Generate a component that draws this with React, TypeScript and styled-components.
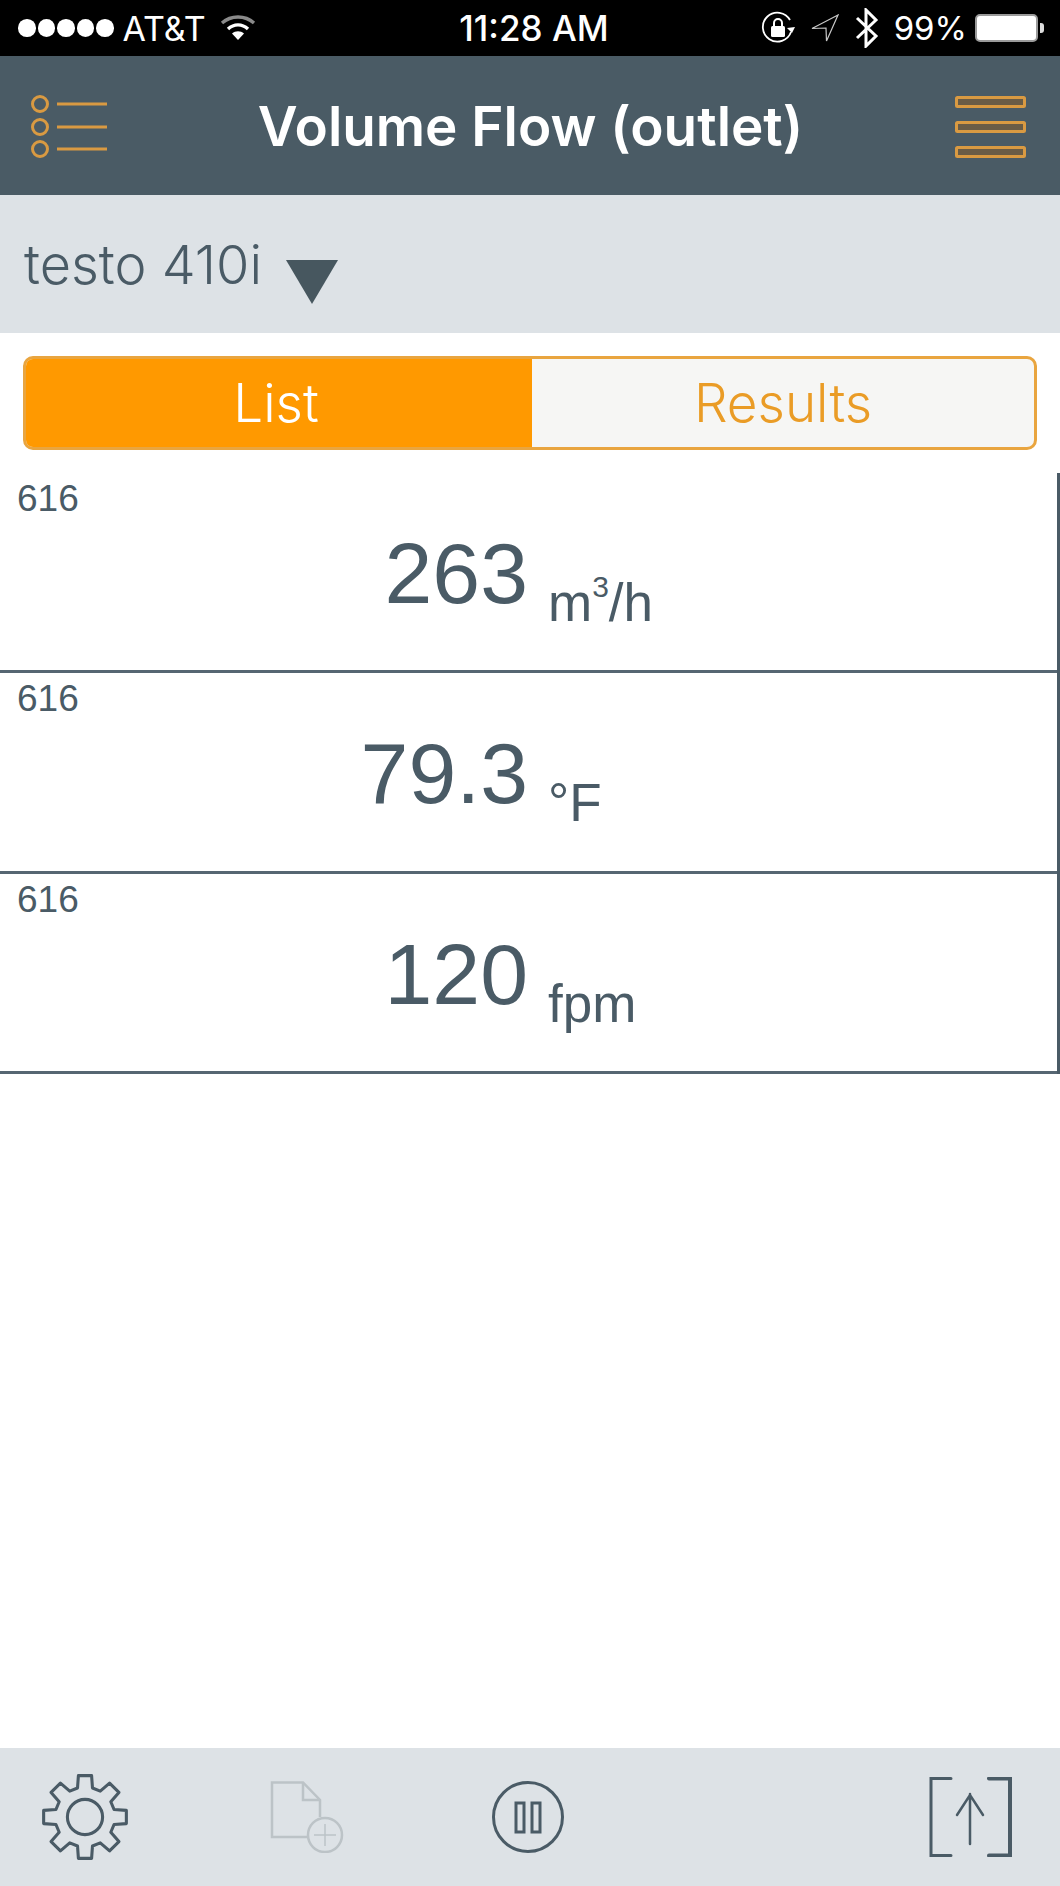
import React from 'react';
import styled, { createGlobalStyle } from 'styled-components';

const SLATE = '#4a5b66';
const ORANGE = '#ff9900';
const ICON_ORANGE = '#d99a42';

const GlobalStyle = createGlobalStyle`
  html, body {
    margin: 0;
    padding: 0;
    background: #fff;
  }
  * {
    box-sizing: border-box;
  }
`;

// 8 tooth gear outline, centred on 50,50
const gearPath = () => {
  const pts: string[] = [];
  for (let i = 0; i < 8; i++) {
    const a = (i * Math.PI) / 4 - Math.PI / 2;
    const p = (r: number, off: number) => {
      const x = 50 + r * Math.cos(a) - off * Math.sin(a);
      const y = 50 + r * Math.sin(a) + off * Math.cos(a);
      return `${x.toFixed(2)} ${y.toFixed(2)}`;
    };
    pts.push(p(33, -8.5), p(47, -7.5), p(47, 7.5), p(33, 8.5));
  }
  return `M${pts.join('L')}Z`;
};

const App = () => {
  const readings = [
    {
      id: 1,
      sensor: '616',
      value: '263',
      unit: (
        <>
          m<Sup>3</Sup>/h
        </>
      ),
    },
    { id: 2, sensor: '616', value: '79.3', unit: <>°F</> },
    { id: 3, sensor: '616', value: '120', unit: <>fpm</> },
  ];

  return (
    <Page>
      <GlobalStyle />
      <StatusBar>
        <StatusLeft>
          <Dots>
            {[0, 1, 2, 3, 4].map((i) => (
              <Dot key={i} />
            ))}
          </Dots>
          <Carrier>AT&amp;T</Carrier>
          <svg width="36" height="28" viewBox="0 0 36 28" fill="none">
            <path d="M2 9C11 1 25 1 34 9" stroke="#8a8a8a" strokeWidth="3.4" />
            <path d="M8 15C14 9.5 22 9.5 28 15" stroke="#fff" strokeWidth="3.4" />
            <path d="M12 19.5C15.5 16.5 20.5 16.5 24 19.5L18 26Z" fill="#fff" />
          </svg>
        </StatusLeft>
        <Clock>11:28 AM</Clock>
        <StatusRight>
          <svg width="34" height="34" viewBox="0 0 34 34" fill="none">
            <path d="M30 21A14.5 14.5 0 1 1 29 9" stroke="#fff" strokeWidth="1.8" />
            <path d="M26 17l5 5 3-6z" fill="#fff" />
            <rect x="10" y="15" width="14" height="11" rx="1.5" fill="#fff" />
            <path d="M13 15v-3a4 4 0 0 1 8 0v3" stroke="#fff" strokeWidth="2" />
          </svg>
          <LocationIcon width="28" height="28" viewBox="0 0 28 28" fill="none">
            <path d="M27 1L1 14.5L15 14L15.5 27Z" stroke="#c8c8c8" strokeWidth="1.2" />
          </LocationIcon>
          <BluetoothIcon width="24" height="40" viewBox="0 0 24 40" fill="none">
            <path d="M2 10L21 28L11 38V2L21 12L2 30" stroke="#fff" strokeWidth="3" />
          </BluetoothIcon>
          <Percent>99%</Percent>
          <Battery />
        </StatusRight>
      </StatusBar>

      <Header>
        <ListIcon width="80" height="64" viewBox="0 0 80 64" fill="none">
          <g stroke={ICON_ORANGE} strokeWidth="3">
            <circle cx="9" cy="9" r="7.5" />
            <circle cx="9" cy="32" r="7.5" />
            <circle cx="9" cy="54" r="7.5" />
            <path d="M26 9H76M26 32H76M26 54H76" />
          </g>
        </ListIcon>
        <Title>Volume Flow (outlet)</Title>
        <MenuIcon width="71" height="62" viewBox="0 0 71 62" fill="none">
          <g stroke={ICON_ORANGE} strokeWidth="3" fill="#6a5c46">
            <rect x="1.5" y="1.5" width="68" height="9" rx="1" />
            <rect x="1.5" y="26.5" width="68" height="9" rx="1" />
            <rect x="1.5" y="51.5" width="68" height="9" rx="1" />
          </g>
        </MenuIcon>
      </Header>

      <DeviceBar>
        <DeviceName>testo 410i</DeviceName>
        <Caret />
      </DeviceBar>

      <TabsWrap>
        <Tabs>
          <Tab $active>List</Tab>
          <Tab>Results</Tab>
        </Tabs>
      </TabsWrap>

      <Readings>
        {readings.map((r) => (
          <Row key={r.id}>
            <Sensor>{r.sensor}</Sensor>
            <Measure>
              <Value>{r.value}</Value>
              <Unit>{r.unit}</Unit>
            </Measure>
          </Row>
        ))}
      </Readings>

      <Spacer />

      <Footer>
        <svg width="88" height="88" viewBox="0 0 100 100" fill="none">
          <path d={gearPath()} stroke={SLATE} strokeWidth="3.5" strokeLinejoin="round" />
          <circle cx="50" cy="50" r="20" stroke={SLATE} strokeWidth="3.5" />
        </svg>
        <NewDocIcon width="74" height="72" viewBox="0 0 74 72" fill="none">
          <g stroke="#bcc3c7" strokeWidth="2.5">
            <path d="M37 56H2V1.5H33L50 19V36" />
            <path d="M33 1.5V19H50" />
            <circle cx="55" cy="54" r="17" />
            <path d="M55 43V65M44 54H66" strokeWidth="1.5" />
          </g>
        </NewDocIcon>
        <PauseIcon width="72" height="72" viewBox="0 0 72 72" fill="none">
          <g stroke={SLATE} strokeWidth="3">
            <circle cx="36" cy="36" r="34.5" />
            <rect x="24" y="22" width="8" height="29" />
            <rect x="40" y="22" width="8" height="29" />
          </g>
        </PauseIcon>
        <ShareIcon width="84" height="80" viewBox="0 0 84 80" fill="none">
          <g stroke={SLATE} strokeWidth="2.5" strokeLinecap="round">
            <path d="M22 1.5H2V78.5H22" strokeWidth="3" />
            <path d="M60 1.5H81V78.5H60" strokeWidth="4" />
            <path d="M41 67V17M28 38L41 18L54 38" />
          </g>
        </ShareIcon>
      </Footer>
    </Page>
  );
};

export default App;

const Page = styled.div`
  width: 1060px;
  height: 1886px;
  display: flex;
  flex-direction: column;
  background: #fff;
  color: ${SLATE};
  font-family: Inter, 'Liberation Sans', sans-serif;
  overflow: hidden;
`;

const StatusBar = styled.div`
  flex: 0 0 56px;
  display: grid;
  grid-template-columns: 1fr auto 1fr;
  align-items: center;
  background: #000;
  color: #fff;
`;

const StatusLeft = styled.div`
  display: flex;
  align-items: center;
  padding-left: 18px;
`;

const Dots = styled.div`
  display: flex;
  gap: 2px;
  margin-right: 9px;
`;

const Dot = styled.span`
  width: 17.5px;
  height: 17.5px;
  border-radius: 50%;
  background: #fff;
`;

const Carrier = styled.span`
  font-size: 34px;
  margin-right: 14px;
`;

const Clock = styled.span`
  margin-left: 8px;
  font-size: 35px;
  font-weight: 500;
`;

const StatusRight = styled.div`
  display: flex;
  align-items: center;
  justify-content: flex-end;
  padding-right: 22px;
`;

const LocationIcon = styled.svg`
  margin-left: 16px;
`;

const BluetoothIcon = styled.svg`
  margin-left: 16px;
`;

const Percent = styled.span`
  font-size: 33px;
  margin-left: 15px;
`;

const Battery = styled.div`
  position: relative;
  width: 63px;
  height: 28px;
  margin-left: 8px;
  border: 2px solid #9a9a9a;
  border-radius: 5px;
  background: #fff;

  &::after {
    content: '';
    position: absolute;
    left: 63px;
    top: 7px;
    width: 4px;
    height: 10px;
    border-radius: 0 3px 3px 0;
    background: #ddd;
  }
`;

const Header = styled.div`
  flex: 0 0 139px;
  display: flex;
  align-items: center;
  justify-content: space-between;
  padding: 0 34px 0 31px;
  background: #4a5b65;
`;

const ListIcon = styled.svg`
  margin-top: 3px;
`;

const MenuIcon = styled.svg`
  margin-top: 2px;
`;

const Title = styled.h1`
  margin: 0 5px 0 0;
  font-size: 54.8px;
  font-weight: 600;
  color: #fff;
`;

const DeviceBar = styled.div`
  flex: 0 0 138px;
  display: flex;
  align-items: center;
  padding-left: 24px;
  background: #dde2e6;
`;

const DeviceName = styled.span`
  font-size: 54px;
  font-weight: 300;
`;

const Caret = styled.span`
  width: 0;
  height: 0;
  margin: 36px 0 0 24px;
  border-left: 26px solid transparent;
  border-right: 26px solid transparent;
  border-top: 44px solid #47575f;
`;

const TabsWrap = styled.div`
  padding: 23px;
`;

const Tabs = styled.div`
  height: 94px;
  display: grid;
  grid-template-columns: 506px 1fr;
  border: 3px solid #e9a53f;
  border-radius: 10px;
  overflow: hidden;
  background: #f6f6f4;
`;

const Tab = styled.div<{ $active?: boolean }>`
  display: flex;
  align-items: center;
  justify-content: center;
  padding-right: ${(p) => (p.$active ? '6px' : '0')};
  font-size: 53px;
  font-weight: 350;
  color: ${(p) => (p.$active ? '#fff' : '#ea9c26')};
  background: ${(p) => (p.$active ? ORANGE : 'transparent')};
`;

const Readings = styled.div`
  border-right: 3px solid ${SLATE};
`;

const Row = styled.div`
  height: 200.4px;
  border-bottom: 3px solid #566672;
  padding-top: 7px;
`;

const Sensor = styled.div`
  padding-left: 17px;
  font-family: 'Liberation Sans', sans-serif;
  font-size: 37px;
  line-height: 38px;
`;

const Measure = styled.div`
  display: grid;
  grid-template-columns: 528px 1fr;
  column-gap: 20px;
  align-items: start;
  padding-top: 5px;
`;

const Value = styled.div`
  text-align: right;
  font-family: 'Liberation Sans', sans-serif;
  font-size: 86px;
  line-height: 100px;
`;

const Unit = styled.div`
  padding-top: 50px;
  font-family: 'Liberation Sans', sans-serif;
  font-size: 53px;
  line-height: 60px;
`;

const Sup = styled.span`
  font-size: 30px;
  line-height: 0;
  vertical-align: 24px;
`;

const Spacer = styled.div`
  flex: 1;
`;

const Footer = styled.div`
  flex: 0 0 138px;
  display: flex;
  align-items: center;
  padding: 0 47px 0 41px;
  background: #dde2e6;
`;

const NewDocIcon = styled.svg`
  margin-left: 141px;
`;

const PauseIcon = styled.svg`
  margin-left: 148px;
`;

const ShareIcon = styled.svg`
  margin-left: auto;
`;
